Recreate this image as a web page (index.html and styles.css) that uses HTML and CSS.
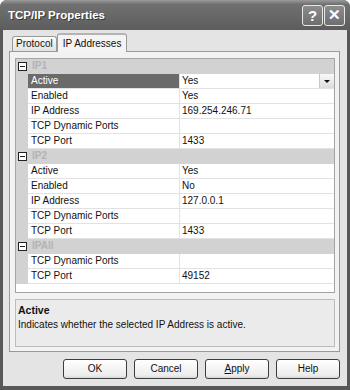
FILE: index.html
```html
<!DOCTYPE html>
<html lang="en">
<head>
    <meta charset="UTF-8">
    <title>TCP/IP Properties</title>
    <link rel="stylesheet" href="styles.css">
</head>
<body>
<div class="window">
    <div class="titlebar">
        <span class="title">TCP/IP Properties</span>
        <div class="title-buttons">
            <span class="title-btn">?</span>
            <span class="title-btn">&#x2715;</span>
        </div>
    </div>
    <div class="content">
        <div class="tabs">
            <span class="tab">Protocol</span>
            <span class="tab selected">IP Addresses</span>
        </div>
        <div class="tab-panel">
            <div class="grid">
                <div class="row category"><span class="margin"><span class="toggle"></span></span><span class="cat-name">IP1</span></div>
                <div class="row selected"><span class="margin"></span><span class="name">Active</span><span class="value">Yes<span class="drop"></span></span></div>
                <div class="row"><span class="margin"></span><span class="name">Enabled</span><span class="value">Yes</span></div>
                <div class="row"><span class="margin"></span><span class="name">IP Address</span><span class="value">169.254.246.71</span></div>
                <div class="row"><span class="margin"></span><span class="name">TCP Dynamic Ports</span><span class="value"></span></div>
                <div class="row"><span class="margin"></span><span class="name">TCP Port</span><span class="value">1433</span></div>
                <div class="row category"><span class="margin"><span class="toggle"></span></span><span class="cat-name">IP2</span></div>
                <div class="row"><span class="margin"></span><span class="name">Active</span><span class="value">Yes</span></div>
                <div class="row"><span class="margin"></span><span class="name">Enabled</span><span class="value">No</span></div>
                <div class="row"><span class="margin"></span><span class="name">IP Address</span><span class="value">127.0.0.1</span></div>
                <div class="row"><span class="margin"></span><span class="name">TCP Dynamic Ports</span><span class="value"></span></div>
                <div class="row"><span class="margin"></span><span class="name">TCP Port</span><span class="value">1433</span></div>
                <div class="row category"><span class="margin"><span class="toggle"></span></span><span class="cat-name">IPAll</span></div>
                <div class="row"><span class="margin"></span><span class="name">TCP Dynamic Ports</span><span class="value"></span></div>
                <div class="row"><span class="margin"></span><span class="name">TCP Port</span><span class="value">49152</span></div>
            </div>
            <div class="desc">
                <div class="desc-title">Active</div>
                <div class="desc-text">Indicates whether the selected IP Address is active.</div>
            </div>
        </div>
        <div class="buttons">
            <span class="btn">OK</span>
            <span class="btn">Cancel</span>
            <span class="btn"><u>A</u>pply</span>
            <span class="btn">Help</span>
        </div>
    </div>
</div>
</body>
</html>
```
FILE: styles.css
```css
body {
    margin: 0;
    background-color: #fff;
    font-family: "Liberation Sans", Arial, sans-serif;
    font-size: 10px;
    color: #111;
}

.window {
    width: 350px;
    height: 390px;
    box-sizing: border-box;
    background-color: #585858;
    border-radius: 7px 7px 0 0;
    display: flex;
    flex-direction: column;
}

.titlebar {
    height: 30px;
    flex: none;
    display: flex;
    align-items: center;
    justify-content: space-between;
    padding: 0 5px 0 8px;
    border-radius: 7px 7px 0 0;
    background: linear-gradient(#9a9a9a, #707070 15%, #666 60%, #5c5c5c);
}

.title {
    color: #fff;
    font-weight: bold;
    font-size: 11.5px;
    text-shadow: 1px 1px 0 #3a3a3a;
}

.title-buttons {
    display: flex;
    gap: 1px;
}

.title-btn {
    width: 19px;
    height: 19px;
    border: 1px solid #e8e8e8;
    border-radius: 3px;
    background: linear-gradient(#8c8c8c, #6e6e6e);
    color: #fff;
    font-weight: bold;
    font-size: 15px;
    display: flex;
    align-items: center;
    justify-content: center;
}

.content {
    flex: 1;
    margin: 0 3px 4px;
    background-color: #e4e4e4;
    padding: 4px 7px 7px 6px;
    display: flex;
    flex-direction: column;
}

.tabs {
    display: flex;
    align-items: flex-end;
    padding-left: 3px;
    height: 17px;
    position: relative;
    z-index: 1;
}

.tab {
    height: 14px;
    line-height: 14px;
    padding: 0 3px;
    border: 1px solid #9a9a9a;
    border-bottom: none;
    border-radius: 3px 3px 0 0;
    background: linear-gradient(#fafafa, #e2e2e2);
}

.tab.selected {
    height: 17px;
    line-height: 17px;
    padding: 0 5px;
    margin-bottom: -1px;
    background: #f4f4f4;
    border-top: 2px solid #b4b4b4;
}

.tab-panel {
    flex: 1;
    border: 1px solid #9a9a9a;
    background-color: #f2f2f2;
    padding: 6px 4px 4px 5px;
    display: flex;
    flex-direction: column;
    gap: 6px;
}

.grid {
    height: 235px;
    box-sizing: border-box;
    border: 1px solid #a4a4a4;
    background-color: #fff;
}

.row {
    display: grid;
    grid-template-columns: 12px 152px 1fr;
    height: 15px;
    line-height: 14px;
}

.margin {
    background-color: #d2d2d2;
    display: flex;
    align-items: center;
    justify-content: center;
}

.name, .value {
    border-bottom: 1px solid #e2e2e2;
    white-space: nowrap;
}

.name {
    padding-left: 3px;
    border-right: 1px solid #e2e2e2;
}

.value {
    padding-left: 2px;
    position: relative;
}

.row.selected .name {
    background-color: #6a6a6a;
    color: #fff;
}

.drop {
    position: absolute;
    right: 0;
    top: 0;
    width: 14px;
    height: 14px;
    background: linear-gradient(#fafafa, #dcdcdc);
    border-left: 1px solid #c8c8c8;
}

.drop::after {
    content: "";
    position: absolute;
    left: 4px;
    top: 6px;
    border-left: 3px solid transparent;
    border-right: 3px solid transparent;
    border-top: 3px solid #111;
}

.row.category {
    background-color: #d2d2d2;
}

.cat-name {
    grid-column: 2 / 4;
    padding-left: 4px;
    font-weight: bold;
    color: #b2b2b2;
}

.toggle {
    width: 7px;
    height: 7px;
    border: 1px solid #222;
    background-color: #fff;
    position: relative;
}

.toggle::after {
    content: "";
    position: absolute;
    left: 1px;
    top: 3px;
    width: 5px;
    height: 1px;
    background-color: #222;
}

.desc {
    flex: 1;
    border: 1px solid #bcbcbc;
    background-color: #ebebeb;
    padding: 4px 2px;
}

.desc-title {
    font-weight: bold;
    font-size: 10.5px;
    line-height: 13px;
}

.desc-text {
    line-height: 16px;
}

.buttons {
    display: flex;
    justify-content: flex-end;
    gap: 7px;
    margin-top: 7px;
}

.btn {
    width: 62px;
    height: 18px;
    line-height: 18px;
    text-align: center;
    border: 1px solid #3c3c3c;
    border-radius: 3px;
    background: linear-gradient(#fff, #ececec 85%, #d6d6d6);
}
```
